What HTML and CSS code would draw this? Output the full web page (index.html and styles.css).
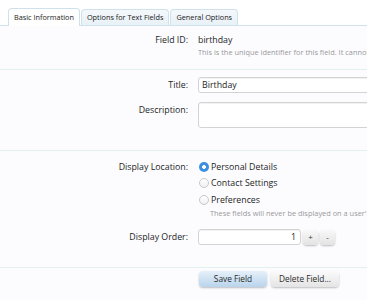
FILE: index.html
```html
<!DOCTYPE html>
<html>
<head>
<meta charset="utf-8">
<link rel="stylesheet" href="styles.css">
</head>
<body>
<div class="page">
  <div class="tabs">
    <div class="tab active">Basic Information</div>
    <div class="tab">Options for Text Fields</div>
    <div class="tab">General Options</div>
  </div>

  <div class="section s1">
    <div class="row">
      <div class="label">Field ID:</div>
      <div class="control">
        <div class="value">birthday</div>
        <div class="hint">This is the unique identifier for this field. It cannot be changed once set.</div>
      </div>
    </div>
  </div>

  <div class="section s2">
    <div class="row">
      <div class="label lh16">Title:</div>
      <div class="control"><div class="input wide">Birthday</div></div>
    </div>
    <div class="row r-desc">
      <div class="label lh16">Description:</div>
      <div class="control"><div class="textarea wide"></div></div>
    </div>
  </div>

  <div class="section s3">
    <div class="row">
      <div class="label lh16">Display Location:</div>
      <div class="control">
        <div class="radio-row"><span class="radio checked"></span>Personal Details</div>
        <div class="radio-row"><span class="radio"></span>Contact Settings</div>
        <div class="radio-row"><span class="radio"></span>Preferences</div>
        <div class="hint indent">These fields will never be displayed on a user's profile.</div>
      </div>
    </div>
    <div class="row r-order">
      <div class="label lh16">Display Order:</div>
      <div class="control spin">
        <div class="input num">1</div>
        <div class="sbtn">+</div>
        <div class="sbtn">-</div>
      </div>
    </div>
  </div>

  <div class="section s4">
    <div class="row">
      <div class="label"></div>
      <div class="control buttons">
        <div class="btn primary">Save Field</div>
        <div class="btn">Delete Field...</div>
      </div>
    </div>
  </div>
</div>
</body>
</html>
```

FILE: styles.css
```css
html, body {
  margin: 0;
  padding: 0;
  background: #fcfcff;
  overflow: hidden;
}
.page {
  width: 367px;
  height: 300px;
  overflow: hidden;
  font-family: "Open Sans", "Lato", sans-serif;
  color: #1e1e1e;
  font-size: 8.8px;
}
.tabs {
  display: flex;
  gap: 1px;
  padding: 8px 0 0 8px;
  border-bottom: 1px solid #cfe1eb;
  background: #ffffff;
  height: 17px;
  align-items: flex-end;
}
.tab {
  font-size: 7.3px;
  height: 15px;
  line-height: 15px;
  padding: 0 5px;
  border: 1px solid #cfe1eb;
  border-bottom: none;
  border-radius: 4px 4px 0 0;
  background: linear-gradient(#f4f8fb, #e8f1f7);
  color: #1a1a1a;
  white-space: nowrap;
}
.tab.active {
  background: #ffffff;
  height: 17px;
  line-height: 17px;
  margin-bottom: -1px;
  position: relative;
}
.section {
  border-bottom: 1px solid #e2f0f0;
}
.s1 { padding: 8px 0 11px; }
.s2 { padding: 7px 0 22px; }
.s3 { padding: 8px 0 22px; }
.s4 { padding: 3px 0 0; border-bottom: none; }
.row {
  display: grid;
  grid-template-columns: 188px 1fr;
  column-gap: 10px;
}
.label {
  text-align: right;
  line-height: 13px;
  white-space: nowrap;
}
.lh16 { line-height: 16px; }
.control {
  min-width: 0;
  white-space: nowrap;
  overflow: hidden;
}
.value { line-height: 13px; }
.hint {
  font-size: 7.4px;
  line-height: 11px;
  color: #9a9a9a;
}
.hint.indent { padding-left: 12px; }
.input, .textarea {
  box-sizing: border-box;
  background: #fff;
  border: 1px solid #d3d3d3;
  border-radius: 3px;
  box-shadow: inset 0 1px 1px rgba(0,0,0,0.06);
}
.input {
  height: 16px;
  line-height: 14px;
  padding: 0 3px;
}
.wide { width: 220px; }
.textarea { height: 26px; }
.r-desc { margin-top: 9px; }
.radio-row {
  display: flex;
  align-items: center;
  height: 16px;
  line-height: 16px;
}
.radio-row:nth-child(3) { height: 17px; }
.radio {
  box-sizing: border-box;
  width: 10px;
  height: 10px;
  border-radius: 50%;
  border: 1px solid #c9c9c9;
  background: linear-gradient(#ffffff, #f0f0f0);
  margin: 0 2px 0 1px;
  flex: none;
}
.radio.checked {
  border: none;
  background: radial-gradient(circle, #ffffff 0 1.6px, #3d8fe0 2.2px);
}
.r-order { margin-top: 10px; }
.spin {
  display: flex;
  align-items: center;
  gap: 2px;
  overflow: visible;
}
.input.num {
  width: 103px;
  text-align: right;
  padding-right: 4px;
}
.sbtn {
  width: 15px;
  height: 15px;
  line-height: 14px;
  text-align: center;
  font-size: 8px;
  border-radius: 4px;
  background: linear-gradient(#f8f8f8, #e3e3e3);
  box-shadow: 0 1px 2px rgba(0,0,0,0.25);
  color: #333;
}
.buttons {
  display: flex;
  gap: 4px;
  padding-left: 1px;
  overflow: visible;
}
.btn {
  height: 16px;
  line-height: 16px;
  padding: 0 8px;
  font-size: 8.3px;
  border-radius: 4px;
  background: linear-gradient(#fbfbfb, #e4e4e4);
  box-shadow: 0 1px 2px rgba(0,0,0,0.25);
  color: #2a2a2a;
}
.btn.primary {
  width: 68px;
  box-sizing: border-box;
  text-align: center;
  padding: 0;
  background: linear-gradient(#e6f0f9, #b9d4ec);
}
```
